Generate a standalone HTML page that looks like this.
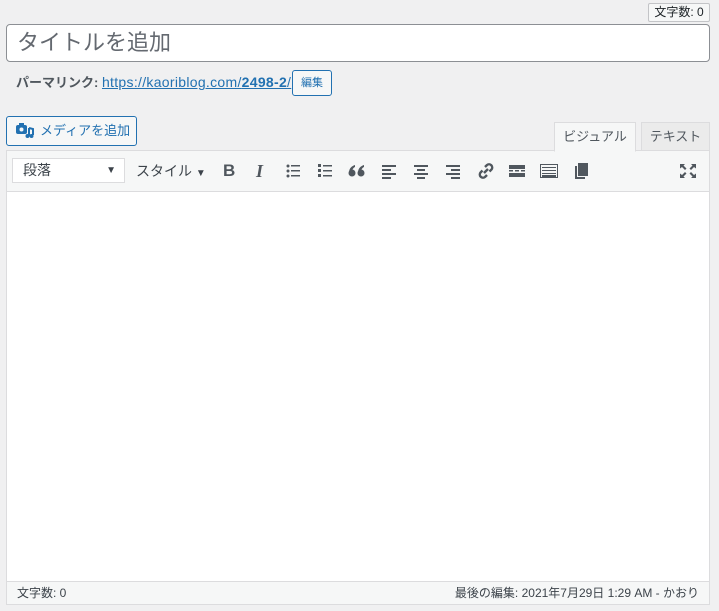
<!DOCTYPE html>
<html><head><meta charset="utf-8"><style>
*{box-sizing:border-box;margin:0;padding:0}
body{width:719px;height:611px;background:#f0f0f1;font-family:"Liberation Sans","Noto Sans CJK JP",sans-serif;position:relative;overflow:hidden;color:#3c434a}
.abs{position:absolute}
.wc{left:648px;top:3px;width:62px;height:19px;border:1px solid #c3c4c7;background:#f6f7f7;font-size:12px;line-height:17px;text-align:center;color:#1d2327;border-radius:2px}
.title{left:6px;top:24px;width:704px;height:38px;border:1px solid #8c8f94;background:#fff;border-radius:4px;font-size:22px;line-height:36px;padding-left:10px;color:#646970}
.perma{left:16px;top:72px;font-size:13px;line-height:20px;color:#50575e;white-space:nowrap}
.perma b{font-weight:bold}
.perma a{color:#2271b1;text-decoration:underline;font-size:14px;letter-spacing:0.3px}
.edit{left:292px;top:70px;width:40px;height:26px;border:1px solid #2271b1;border-radius:3px;color:#2271b1;font-size:11px;line-height:24px;text-align:center;background:#f6f7f7}
.media{left:6px;top:116px;width:131px;height:30px;border:1px solid #2271b1;border-radius:3px;color:#2271b1;font-size:13px;line-height:28px;background:#f6f7f7;padding-left:33px}
.tab{top:122px;height:29px;border:1px solid #dcdcde;font-size:13px;line-height:27px;text-align:center;color:#50575e;background:#ebebeb}
.box{left:6px;top:150px;width:704px;height:455px;border:1px solid #dcdcde;background:#fff}
.tb{left:7px;top:151px;width:702px;height:41px;background:#f6f7f7;border-bottom:1px solid #dcdcde}
.sel{left:12px;top:158px;width:113px;height:25px;border:1px solid #dcdcde;background:#fff;font-size:14px;line-height:23px;padding-left:10px;color:#3c434a}
.ic{top:161px;font-size:16px;color:#50575e;line-height:20px}
.foot{left:7px;top:581px;width:702px;height:23px;background:#f6f7f7;border-top:1px solid #dcdcde;font-size:12px;line-height:22px;color:#3c434a}
</style></head><body>
<div class="abs wc">文字数: 0</div>
<div class="abs title">タイトルを追加</div>
<div class="abs perma"><b>パーマリンク:</b> <a>https://kaoriblog.com/<b>2498-2</b>/</a></div>
<div class="abs edit">編集</div>
<div class="abs media">メディアを追加</div>
<svg class="abs" style="left:16px;top:123px" width="20" height="16" viewBox="0 0 20 16"><rect x="0" y="2" width="11" height="9" rx="2" fill="#2271b1"/><rect x="3" y="0" width="5" height="3" fill="#2271b1"/><circle cx="5.5" cy="6.5" r="2" fill="#f6f7f7"/><path d="M13 5v8" stroke="#2271b1" stroke-width="2"/><circle cx="11.5" cy="13" r="2" fill="#2271b1"/><path d="M13 5l4 1v6" stroke="#2271b1" stroke-width="2" fill="none"/><circle cx="15.5" cy="13" r="2" fill="#2271b1"/></svg>
<div class="abs tab" style="left:641px;width:69px">テキスト</div>
<div class="abs box"></div>
<div class="abs tab" style="left:554px;width:82px;background:#f6f7f7;border-bottom-color:#f6f7f7;z-index:2;height:30px">ビジュアル</div>
<div class="abs tb"></div>
<div class="abs sel">段落<span style="position:absolute;right:8px;top:0;font-size:10px">▼</span></div>
<div class="abs ic" style="left:136px;font-size:14px;color:#3c434a">スタイル <span style="font-size:10px">▼</span></div>
<div class="abs ic" style="left:223px;font-weight:bold;font-size:17px">B</div>
<div class="abs ic" style="left:256px;font-style:italic;font-family:'Liberation Serif',serif;font-weight:bold;font-size:18px">I</div>
<svg class="abs" style="left:285px;top:163px" width="16" height="16"><g fill="#50575e"><circle cx="3" cy="3" r="1.5"/><circle cx="3" cy="8" r="1.5"/><circle cx="3" cy="13" r="1.5"/><rect x="6" y="2" width="9" height="1.5"/><rect x="6" y="7" width="9" height="1.5"/><rect x="6" y="12" width="9" height="1.5"/></g></svg>
<svg class="abs" style="left:317px;top:163px" width="16" height="16"><g fill="#50575e"><rect x="1" y="1" width="3" height="3"/><rect x="1" y="6" width="3" height="3"/><rect x="1" y="11" width="3" height="3"/><rect x="6" y="2" width="9" height="1.5"/><rect x="6" y="7" width="9" height="1.5"/><rect x="6" y="12" width="9" height="1.5"/></g></svg>
<svg class="abs" style="left:348px;top:164px" width="18" height="14"><g fill="#50575e"><circle cx="4" cy="9" r="3.5"/><path d="M1 9c0-5 3-7 6-8v2c-2 1-3 3-3 5z"/><circle cx="13" cy="9" r="3.5"/><path d="M10 9c0-5 3-7 6-8v2c-2 1-3 3-3 5z"/></g></svg>
<svg class="abs" style="left:381px;top:163px" width="16" height="16"><g fill="#50575e"><rect x="1" y="2" width="14" height="2"/><rect x="1" y="6" width="9" height="2"/><rect x="1" y="10" width="14" height="2"/><rect x="1" y="14" width="9" height="2"/></g></svg>
<svg class="abs" style="left:413px;top:163px" width="16" height="16"><g fill="#50575e"><rect x="1" y="2" width="14" height="2"/><rect x="4" y="6" width="8" height="2"/><rect x="1" y="10" width="14" height="2"/><rect x="4" y="14" width="8" height="2"/></g></svg>
<svg class="abs" style="left:445px;top:163px" width="16" height="16"><g fill="#50575e"><rect x="1" y="2" width="14" height="2"/><rect x="6" y="6" width="9" height="2"/><rect x="1" y="10" width="14" height="2"/><rect x="6" y="14" width="9" height="2"/></g></svg>
<svg class="abs" style="left:476px;top:161px" width="20" height="20"><g fill="none" stroke="#50575e" stroke-width="2.4"><path d="M9 6l2-2a3.2 3.2 0 014.5 4.5l-2 2"/><path d="M11 14l-2 2a3.2 3.2 0 01-4.5-4.5l2-2"/><path d="M8 12l4-4"/></g></svg>
<svg class="abs" style="left:508px;top:163px" width="18" height="16"><g fill="#50575e"><rect x="1" y="2" width="16" height="4"/><rect x="1" y="7" width="4" height="1.5"/><rect x="7" y="7" width="4" height="1.5"/><rect x="13" y="7" width="4" height="1.5"/><rect x="1" y="10" width="16" height="4"/></g></svg>
<svg class="abs" style="left:539px;top:162px" width="20" height="18"><g fill="none" stroke="#50575e"><rect x="1.5" y="2.5" width="17" height="13"/></g><g fill="#50575e"><rect x="3" y="5" width="14" height="1"/><rect x="3" y="8" width="14" height="1"/><rect x="3" y="11" width="14" height="1"/><rect x="3" y="13" width="14" height="2"/></g></svg>
<svg class="abs" style="left:573px;top:162px" width="16" height="18"><g fill="#50575e"><rect x="5" y="1" width="10" height="13"/><rect x="2" y="4" width="2" height="13"/><rect x="2" y="15" width="10" height="2"/></g></svg>
<svg class="abs" style="left:679px;top:163px" width="18" height="16"><g fill="#50575e"><path d="M1 1h5l-1.5 1.5 3 3-1.5 1.5-3-3L1 5.5z"/><path d="M17 1h-5l1.5 1.5-3 3 1.5 1.5 3-3L17 5.5z"/><path d="M1 15h5l-1.5-1.5 3-3-1.5-1.5-3 3L1 10.5z"/><path d="M17 15h-5l1.5-1.5-3-3 1.5-1.5 3 3L17 10.5z"/></g></svg>
<div class="abs foot"><span style="position:absolute;left:10px">文字数: 0</span><span style="position:absolute;right:10px">最後の編集: 2021年7月29日 1:29 AM - かおり</span></div>
</body></html>
